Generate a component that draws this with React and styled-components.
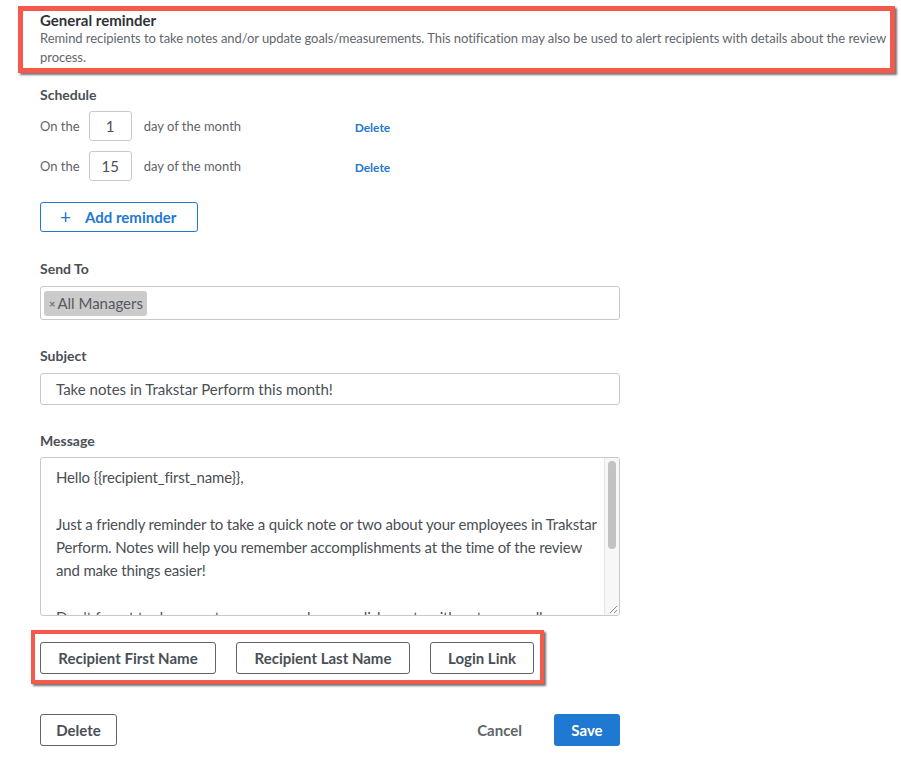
import React from "react";
import styled, { createGlobalStyle } from "styled-components";

const Global = createGlobalStyle`
  html, body { margin: 0; padding: 0; background: #fff; }
  body { font-family: "Lato", "Open Sans", sans-serif; color: #4a4f55; }
  * { box-sizing: border-box; }
`;

const Page = styled.div`
  width: 901px;
  padding: 6px 0 0 40px;
  display: flex;
  flex-direction: column;
`;

const Highlight = styled.div`
  border: ${(p) => p.$w || 5}px solid #f4594c;
  box-shadow: 2px 2px 2px rgba(0, 0, 0, 0.55);
  background: #fff;
`;

const HeaderBox = styled(Highlight)`
  margin-left: -22px;
  width: 877px;
  padding: 0 0 1px 17px;
`;

const Title = styled.div`
  font-size: 15px;
  font-weight: 700;
  line-height: 18px;
  color: #2f3338;
`;

const Desc = styled.div`
  font-size: 13px;
  line-height: 19px;
  color: #62676d;
  letter-spacing: -0.06px;
`;

const Form = styled.div`
  width: 580px;
  display: flex;
  flex-direction: column;
`;

const Label = styled.div`
  font-size: 14px;
  font-weight: 700;
  line-height: 18px;
  color: #4a4f55;
  margin-top: ${(p) => p.$top}px;
  margin-bottom: ${(p) => p.$bottom}px;
`;

const Rows = styled.div`
  display: flex;
  flex-direction: column;
  gap: 10px;
`;

const Row = styled.div`
  display: flex;
  align-items: center;
  height: 30px;
  font-size: 13px;
  color: #5f646a;
`;

const DayInput = styled.div`
  width: 43px;
  height: 30px;
  margin: 0 12px 0 9px;
  border: 1px solid #c9c9c9;
  border-radius: 3px;
  display: flex;
  align-items: center;
  justify-content: center;
  font-size: 15px;
  color: #4a4f55;
`;

const DayText = styled.span`
  width: 211px;
`;

const LinkButton = styled.span`
  font-size: 12px;
  font-weight: 700;
  color: #1f78d1;
  padding-top: 2px;
`;

const AddButton = styled.div`
  margin-top: 21px;
  width: 158px;
  height: 30px;
  border: 1px solid #1f78d1;
  border-radius: 3px;
  display: flex;
  align-items: center;
  padding-left: 19px;
  gap: 14px;
  color: #1f78d1;
  font-size: 15px;
  font-weight: 700;
`;

const Plus = styled.span`
  font-size: 19px;
  font-weight: 400;
  line-height: 1;
  margin-top: -2px;
`;

const Field = styled.div`
  width: 580px;
  height: ${(p) => p.$h}px;
  border: 1px solid #c9c9c9;
  border-radius: 3px;
  display: flex;
  align-items: center;
  padding: ${(p) => p.$pad || "0 15px"};
  font-size: 15px;
  color: #4a4f55;
`;

const Tag = styled.span`
  display: inline-flex;
  align-items: center;
  height: 25px;
  padding: 0 4px 0 5px;
  gap: 2px;
  background: #cbcbcb;
  border-radius: 3px;
  font-size: 15px;
  color: #55595f;
`;

const TagX = styled.span`
  font-size: 11px;
  color: #6f7378;
  font-weight: 700;
`;

const MessageWrap = styled.div`
  position: relative;
  width: 580px;
  height: 159px;
`;

const Message = styled.textarea`
  display: block;
  width: 580px;
  height: 159px;
  border: 1px solid #c9c9c9;
  border-radius: 3px;
  padding: 8px 15px 0 15px;
  font-family: "Lato", "Open Sans", sans-serif;
  font-size: 15px;
  line-height: 23.3px;
  letter-spacing: -0.17px;
  color: #4a4f55;
  resize: none;
  outline: none;
  overflow: hidden;
`;

const ScrollTrack = styled.div`
  position: absolute;
  top: 1px;
  right: 1px;
  bottom: 1px;
  width: 15px;
  background: #f7f7f7;
  border-left: 1px solid #e6e6e6;
  border-radius: 0 2px 2px 0;
`;

const ScrollThumb = styled.div`
  position: absolute;
  top: 3px;
  left: 3px;
  width: 8px;
  height: 88px;
  border-radius: 4px;
  background: #c2c2c2;
`;

const Resizer = styled.svg`
  position: absolute;
  right: 1px;
  bottom: 1px;
`;

const TokenBox = styled(Highlight)`
  margin-top: 14px;
  margin-left: -9px;
  width: 513px;
  padding: 8px 0 6px 5px;
  display: flex;
  gap: 20px;
`;

const OutlineButton = styled.div`
  height: 32px;
  width: ${(p) => p.$w}px;
  border: 1px solid #5f646a;
  border-radius: 3px;
  display: flex;
  align-items: center;
  justify-content: center;
  font-size: 15px;
  font-weight: 700;
  color: #4a4f55;
  white-space: nowrap;
`;

const Footer = styled.div`
  margin-top: 30px;
  width: 580px;
  display: flex;
  align-items: center;
`;

const Spacer = styled.div`
  flex: 1;
`;

const TextButton = styled.span`
  font-size: 15px;
  font-weight: 700;
  color: #5f646a;
  margin-right: 32px;
`;

const PrimaryButton = styled.div`
  width: 66px;
  height: 32px;
  background: #1f78d1;
  border-radius: 3px;
  color: #fff;
  font-size: 15px;
  font-weight: 700;
  display: flex;
  align-items: center;
  justify-content: center;
`;

const messageText =
  "Hello {{recipient_first_name}},\n\nJust a friendly reminder to take a quick note or two about your employees in Trakstar Perform. Notes will help you remember accomplishments at the time of the review and make things easier!\n\nDon't forget to document your personal accomplishments with notes as well.\nThey will be available when you write your review.\n\nThanks!";

export default function App() {
  const schedule = ["1", "15"];
  return (
    <>
      <Global />
      <Page>
        <HeaderBox>
          <Title>General reminder</Title>
          <Desc>
            Remind recipients to take notes and/or update goals/measurements. This notification may
            also be used to alert recipients with details about the review process.
          </Desc>
        </HeaderBox>
        <Form>
          <Label $top={13} $bottom={7}>Schedule</Label>
          <Rows>
            {schedule.map((d) => (
              <Row key={d}>
                <span>On the</span>
                <DayInput>{d}</DayInput>
                <DayText>day of the month</DayText>
                <LinkButton>Delete</LinkButton>
              </Row>
            ))}
          </Rows>
          <AddButton>
            <Plus>+</Plus>
            <span>Add reminder</span>
          </AddButton>

          <Label $top={28} $bottom={8}>Send To</Label>
          <Field $h={34} $pad="0 3px">
            <Tag>
              <TagX>×</TagX>
              All Managers
            </Tag>
          </Field>

          <Label $top={27} $bottom={8}>Subject</Label>
          <Field $h={32}>Take notes in Trakstar Perform this month!</Field>

          <Label $top={27} $bottom={7}>Message</Label>
          <MessageWrap>
            <Message defaultValue={messageText} />
            <ScrollTrack>
              <ScrollThumb />
            </ScrollTrack>
            <Resizer width="14" height="14" viewBox="0 0 14 14">
              <path d="M12 5 L5 12 M12 9 L9 12" stroke="#8a8a8a" strokeWidth="1" fill="none" />
            </Resizer>
          </MessageWrap>

          <TokenBox $w={4}>
            <OutlineButton $w={176}>Recipient First Name</OutlineButton>
            <OutlineButton $w={174}>Recipient Last Name</OutlineButton>
            <OutlineButton $w={104}>Login Link</OutlineButton>
          </TokenBox>
        </Form>
        <Footer>
          <OutlineButton $w={77}>Delete</OutlineButton>
          <Spacer />
          <TextButton>Cancel</TextButton>
          <PrimaryButton>Save</PrimaryButton>
        </Footer>
      </Page>
    </>
  );
}
